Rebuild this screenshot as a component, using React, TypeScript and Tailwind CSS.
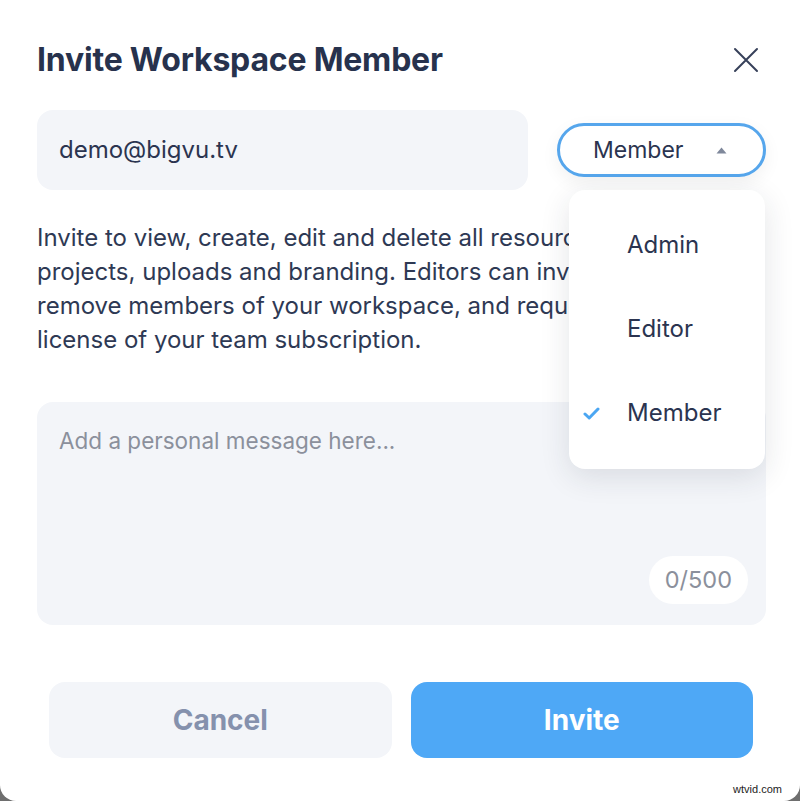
import { useState } from "react";

const roles = ["Admin", "Editor", "Member"];

// Small caret that points up while the menu is open
const Caret = () => (
  <svg width="11" height="7" viewBox="0 0 11 7" className="shrink-0">
    <path d="M5.5 0.5 L10.5 6.5 L0.5 6.5 Z" fill="#7f889b" />
  </svg>
);

const Check = () => (
  <svg width="17" height="13" viewBox="0 0 17 13" fill="none">
    <path d="M2 7 L6.2 11 L15 2" stroke="#4ba6f2" strokeWidth="3" strokeLinecap="round" strokeLinejoin="round" />
  </svg>
);

const CloseIcon = () => (
  <svg width="26" height="26" viewBox="0 0 26 26" fill="none">
    <path d="M2 2 L24 24 M24 2 L2 24" stroke="#37415a" strokeWidth="2" strokeLinecap="round" />
  </svg>
);

export default function App() {
  const [role] = useState("Member");
  const [message, setMessage] = useState("");

  return (
    <div className="w-[800px] h-[801px] bg-[#6e6e6e] font-['Inter',sans-serif]">
      <div className="relative h-full bg-white rounded-b-2xl pl-[37px] pr-[34px]">
        {/* Header */}
        <div className="flex items-center justify-between pt-[41px]">
          <h1 className="text-[32px] leading-[38px] font-bold text-[#27324d] tracking-[-0.2px]">
            Invite Workspace Member
          </h1>
          <button className="mr-[3px] p-1">
            <CloseIcon />
          </button>
        </div>

        {/* Email + role */}
        <div className="mt-[31px] flex items-center">
          <div className="w-[491px] h-[80px] rounded-2xl bg-[#f3f5f9] flex items-center px-[22px]">
            <span className="text-[24px] text-[#2b3450]">demo@bigvu.tv</span>
          </div>
          <button className="ml-auto w-[209px] h-[54px] rounded-full border-[3px] border-[#56a6ec] flex items-center pl-[33px] gap-[33px] shadow-[0_6px_18px_rgba(0,0,0,0.06)]">
            <span className="text-[23px] text-[#2b3450]">{role}</span>
            <Caret />
          </button>
        </div>

        {/* Description */}
        <p className="mt-[31px] text-[24px] leading-[34px] text-[#2e3954]">
          Invite to view, create, edit and delete all resources,
          <br />
          projects, uploads and branding. Editors can invite and
          <br />
          remove members of your workspace, and request a
          <br />
          license of your team subscription.
        </p>

        {/* Message */}
        <div className="relative mt-[45px] h-[223px] rounded-2xl bg-[#f3f5f9]">
          <textarea
            value={message}
            onChange={(e) => setMessage(e.target.value)}
            placeholder="Add a personal message here..."
            className="w-full h-full resize-none bg-transparent px-[22px] pt-[23px] text-[22.5px] leading-[32px] text-[#2b3450] placeholder:text-[#8b909c] outline-none"
          />
          <div className="absolute right-[18px] bottom-[21px] h-[48px] px-[16px] rounded-full bg-white flex items-center text-[23.5px] text-[#8b909c]">
            {message.length}/500
          </div>
        </div>

        {/* Actions */}
        <div className="mt-[57px] pl-[12px] pr-[13px] flex gap-[19px]">
          <button className="flex-1 h-[76px] rounded-2xl bg-[#f3f5f9] text-[28px] font-bold text-[#8591ad]">
            Cancel
          </button>
          <button className="flex-1 h-[76px] rounded-2xl bg-[#4ea8f6] text-[28px] font-bold text-white">
            Invite
          </button>
        </div>

        {/* Role menu */}
        <div className="absolute left-[569px] top-[190px] w-[196px] h-[279px] rounded-2xl bg-white shadow-[0_8px_30px_rgba(30,40,60,0.12)] flex flex-col pt-[13px]">
          {roles.map((r) => (
            <div key={r} className="h-[84px] flex items-center">
              <div className="w-[58px] pl-[14px]">{r === role && <Check />}</div>
              <span className="text-[24px] text-[#2b3450]">{r}</span>
            </div>
          ))}
        </div>

        <span className="absolute right-[18px] bottom-[4px] text-[11px] text-[#222] font-['Liberation_Sans',sans-serif]">
          wtvid.com
        </span>
      </div>
    </div>
  );
}
